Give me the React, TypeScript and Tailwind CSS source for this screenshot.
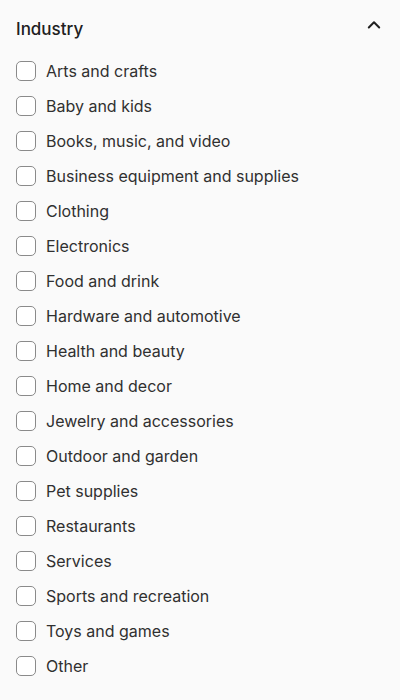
import React from "react";

const items = [
  "Arts and crafts",
  "Baby and kids",
  "Books, music, and video",
  "Business equipment and supplies",
  "Clothing",
  "Electronics",
  "Food and drink",
  "Hardware and automotive",
  "Health and beauty",
  "Home and decor",
  "Jewelry and accessories",
  "Outdoor and garden",
  "Pet supplies",
  "Restaurants",
  "Services",
  "Sports and recreation",
  "Toys and games",
  "Other",
];

export default function App() {
  return (
    <div
      className="w-[400px] h-[700px] bg-[#fafafa] px-4 text-[#303030]"
      style={{ fontFamily: "Inter, 'Noto Sans', sans-serif" }}
    >
      <div className="flex items-center justify-between pt-[17px] h-[41px]">
        <span className="text-[17px] leading-6 font-medium text-[#202020]">Industry</span>
        <svg width="14" height="14" viewBox="0 0 14 14" className="mr-[3px] -translate-y-[4px]">
          <path d="M1.8 9.5 L7 4.3 L12.2 9.5" fill="none" stroke="#202020" strokeWidth="2" strokeLinecap="round" strokeLinejoin="round" />
        </svg>
      </div>
      <div className="mt-[12px] flex flex-col">
        {items.map((it) => (
          <label key={it} className="flex items-center h-[35px] gap-[10px]">
            <span className="w-5 h-5 rounded-[5px] border-[1.5px] border-[#8a8a8a] bg-white" />
            <span className="text-[16px] leading-6 text-[#303030]">{it}</span>
          </label>
        ))}
      </div>
    </div>
  );
}
